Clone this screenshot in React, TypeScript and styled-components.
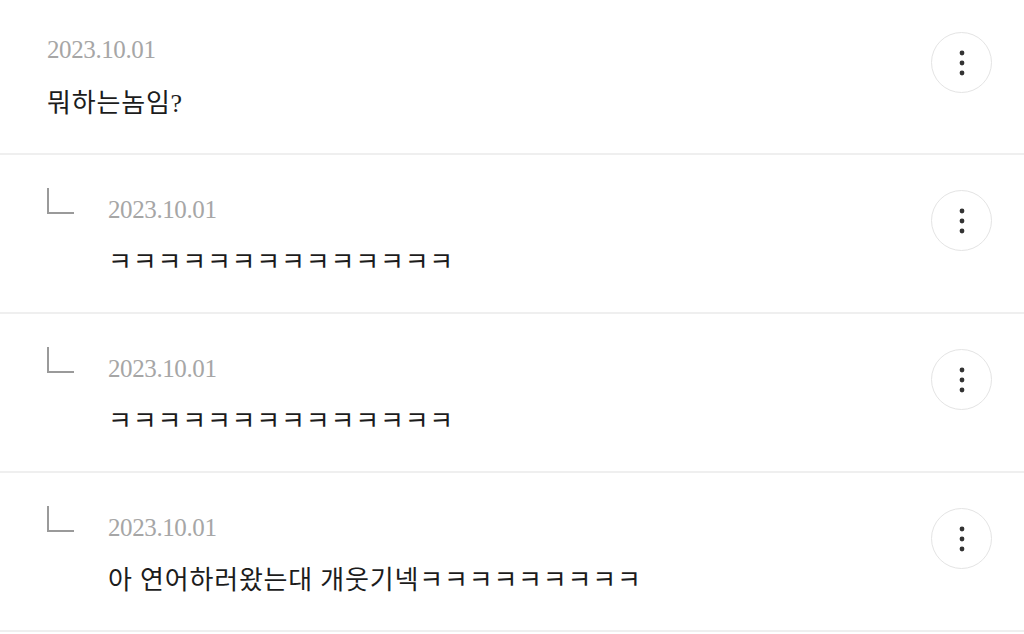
import React from 'react';
import styled, { createGlobalStyle } from 'styled-components';

const GlobalStyle = createGlobalStyle`
  html, body {
    margin: 0;
    padding: 0;
    background: #ffffff;
  }
  body {
    font-family: "Liberation Serif", "Noto Sans CJK KR", serif;
    -webkit-font-smoothing: antialiased;
  }
`;

const List = styled.ul`
  list-style: none;
  margin: 0;
  padding: 0;
  width: 1024px;
`;

const Row = styled.li<{ $reply?: boolean }>`
  display: flex;
  align-items: flex-start;
  padding: ${p => (p.$reply ? '37px 32px 31px 47px' : '32px 32px 31px 47px')};
  border-bottom: 2px solid #efefef;
`;

const ReplyMark = styled.span`
  flex: 0 0 auto;
  width: 27px;
  height: 26px;
  margin: -4px 34px 0 0;
  border-left: 2px solid #9a9a9a;
  border-bottom: 2px solid #9a9a9a;
  box-sizing: border-box;
`;

const Body = styled.div<{ $reply?: boolean }>`
  flex: 1;
  display: flex;
  flex-direction: column;
  gap: ${p => (p.$reply ? '17px' : '18px')};
  min-width: 0;
`;

const Date = styled.time`
  font-size: 25px;
  line-height: 36px;
  color: #a6a6a6;
  letter-spacing: -0.4px;
`;

const Text = styled.p`
  margin: 0;
  font-size: 26px;
  line-height: 36px;
  color: #1c1c1c;
  letter-spacing: 0.8px;
`;

const MoreButton = styled.button<{ $reply?: boolean }>`
  flex: 0 0 auto;
  width: 61px;
  height: 61px;
  margin-top: ${p => (p.$reply ? '-2px' : '0')};
  border-radius: 50%;
  border: 1px solid #e4e4e4;
  background: #ffffff;
  display: flex;
  align-items: center;
  justify-content: center;
  padding: 0;
  cursor: pointer;
  color: #333333;
`;

const Dots = () => (
  <svg width="6" height="26" viewBox="0 0 6 26" fill="currentColor" aria-hidden>
    <circle cx="3" cy="3" r="2.4" />
    <circle cx="3" cy="13" r="2.4" />
    <circle cx="3" cy="23" r="2.4" />
  </svg>
);

interface Comment {
  id: number;
  date: string;
  text: string;
  reply?: boolean;
}

const comments: Comment[] = [
  { id: 1, date: '2023.10.01', text: '뭐하는놈임?' },
  { id: 2, date: '2023.10.01', text: 'ㅋㅋㅋㅋㅋㅋㅋㅋㅋㅋㅋㅋㅋㅋ', reply: true },
  { id: 3, date: '2023.10.01', text: 'ㅋㅋㅋㅋㅋㅋㅋㅋㅋㅋㅋㅋㅋㅋ', reply: true },
  { id: 4, date: '2023.10.01', text: '아 연어하러왔는대 개웃기넥ㅋㅋㅋㅋㅋㅋㅋㅋㅋ', reply: true },
];

export default function App() {
  return (
    <>
      <GlobalStyle />
      <List>
        {comments.map(c => (
          <Row key={c.id} $reply={c.reply}>
            {c.reply && <ReplyMark />}
            <Body $reply={c.reply}>
              <Date>{c.date}</Date>
              <Text>{c.text}</Text>
            </Body>
            <MoreButton $reply={c.reply} aria-label="더보기">
              <Dots />
            </MoreButton>
          </Row>
        ))}
      </List>
    </>
  );
}
